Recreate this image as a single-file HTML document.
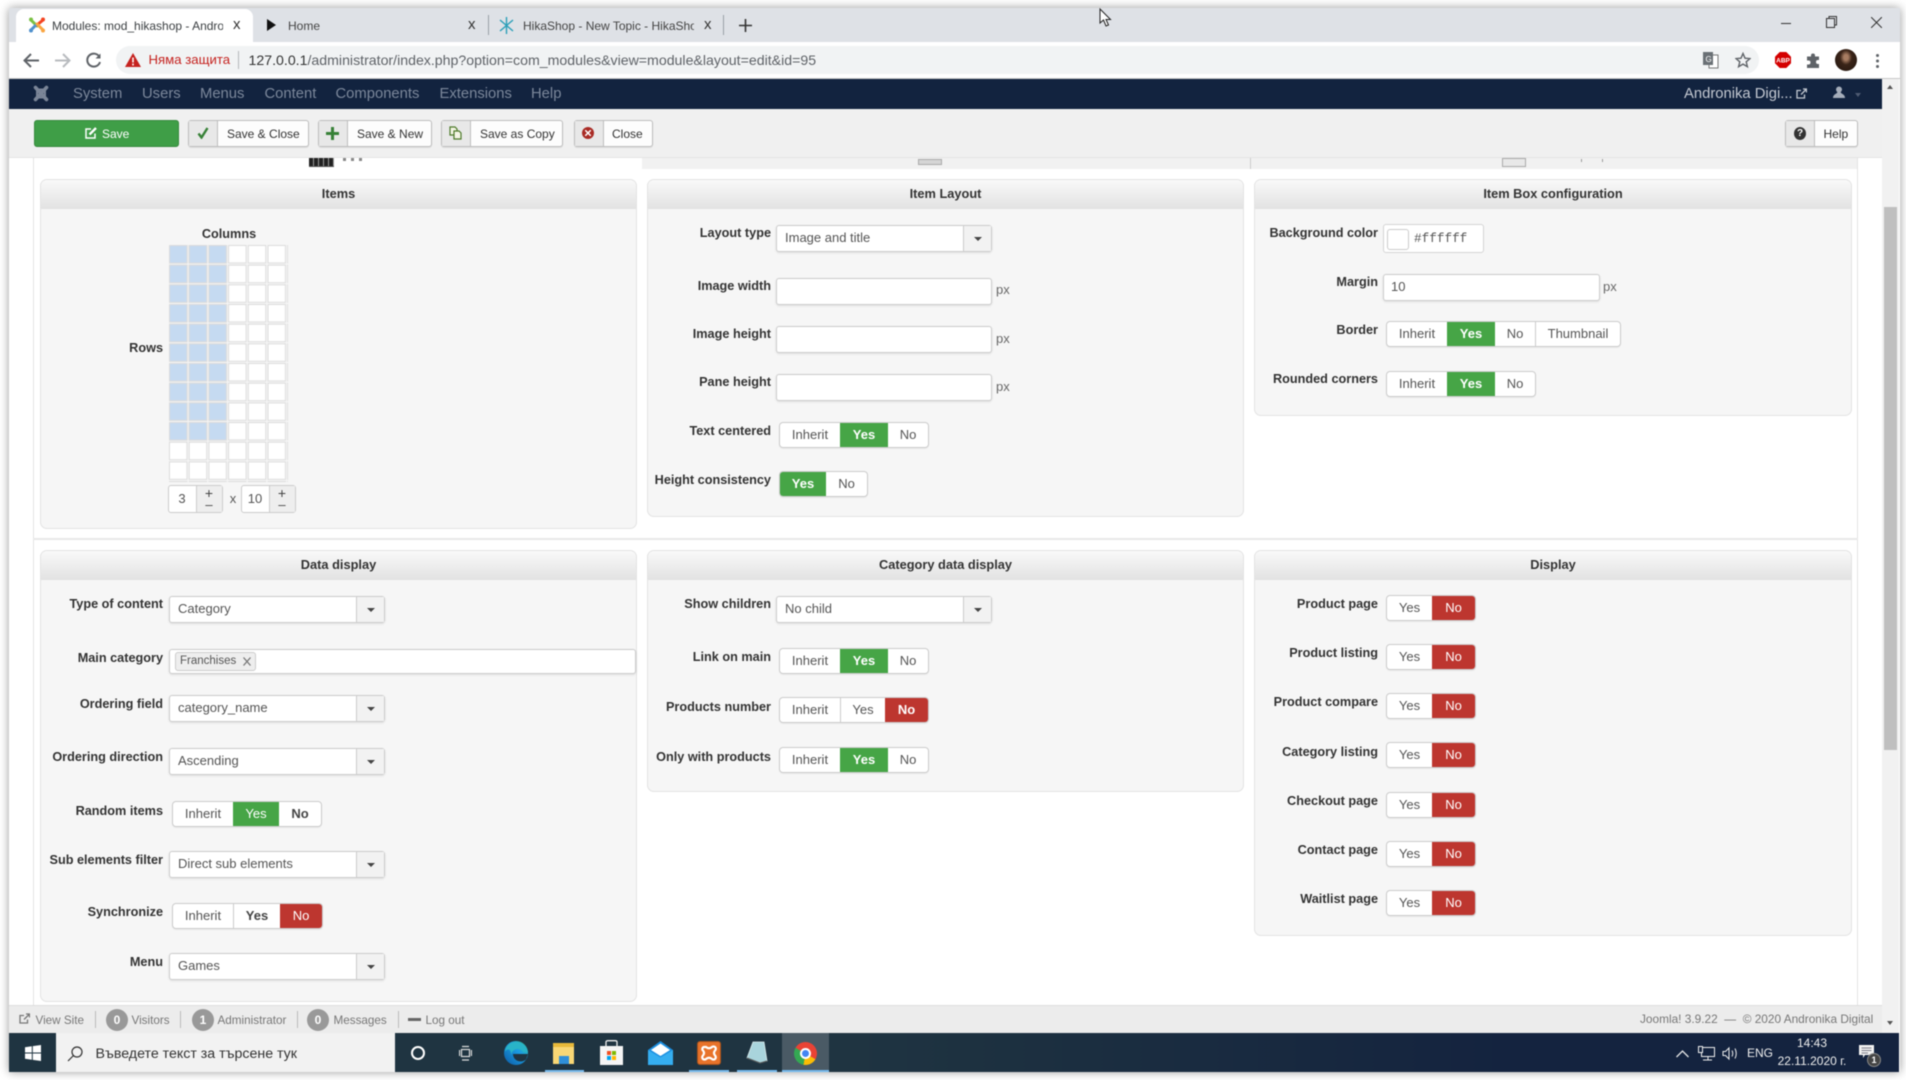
<!DOCTYPE html>
<html><head><meta charset="utf-8"><title>Modules: mod_hikashop</title>
<style>
html,body{margin:0;padding:0;background:#fff}
#p{position:relative;width:1906px;height:1080px;overflow:hidden;background:#fff;font-family:"Liberation Sans","Noto Sans CJK JP",sans-serif;font-size:13px;color:#333;filter:blur(.45px)}
#p div,#p span,#p svg{position:absolute}
.t{white-space:nowrap;line-height:20px;height:20px}
.p{background:#f6f6f6;border:1px solid #e3e3e3;border-radius:7px;overflow:hidden;box-sizing:border-box}
.p h3{margin:0;height:29px;line-height:27px;text-align:center;font-size:12.8px;font-weight:bold;background:linear-gradient(#f9f9f9,#e2e2e2);color:#333}
.l{left:0;text-align:right;font-weight:bold;font-size:12.7px;color:#333;white-space:nowrap;line-height:20px;height:20px}
.c1{width:163px}.c2{width:771px}.c3{width:1378px}
.s,.i{background:#fff;border:1px solid #ccc;border-radius:3px;box-sizing:border-box;height:27px;box-shadow:0 1px 2px rgba(0,0,0,.1);color:#555;line-height:23px;padding-left:8px;white-space:nowrap}
.s i{position:absolute;right:0;top:0;width:28px;height:25px;background:#f2f2f2;border-left:1px solid #ccc;box-sizing:border-box}
.s i:after{content:"";position:absolute;left:10px;top:11px;border:4px solid transparent;border-top:4px solid #444;border-bottom:0}
.g{display:flex;height:24px;border-radius:3px;box-shadow:0 0 0 1px #ccc,0 1px 2px rgba(0,0,0,.15);background:#fff;overflow:hidden}
.g b{display:block;font-weight:normal;text-align:center;line-height:24px;color:#555;box-sizing:border-box;border-left:1px solid #ccc}
.g b:first-child{border-left:0}
.g b.y{background:#46a546;color:#fff;font-weight:bold;border-left:0}
.g b.n{background:#bd362f;color:#fff;font-weight:bold;border-left:0}
.g b.y+b,.g b.n+b{border-left:0}
.g b.d{font-weight:bold;color:#444}
.b{height:27px;top:120px;background:#fdfdfd;border:1px solid #bdbdbd;border-radius:3px;box-sizing:border-box;font-size:12px;line-height:26px;white-space:nowrap;color:#333;box-shadow:0 1px 1px rgba(0,0,0,.08)}
.b i{position:absolute;left:0;top:0;width:28px;height:25px;background:#e8e8e8;border-right:1px solid #bdbdbd}
.b span{top:0}
.px{color:#666;line-height:20px;height:20px}
.nv{top:84px;height:20px;line-height:20px;font-size:14.8px;color:#7c889b;white-space:nowrap}
.f{top:1011px;height:20px;line-height:20px;font-size:11.7px;color:#777;white-space:nowrap}
.bd{top:1009px;width:22px;height:22px;border-radius:50%;background:#999;color:#fff;font-weight:bold;font-size:12px;text-align:center;line-height:22px}
.sp{top:1011px;width:1px;height:17px;background:#bbb}
</style></head><body><div id="p">

<!-- window -->
<div style="left:9px;top:8px;width:1891px;height:1064px;background:#fff;box-shadow:0 0 9px rgba(0,0,0,.4)"></div>
<div style="left:9px;top:8px;width:1891px;height:34px;background:#dee1e6"></div>
<!-- active tab -->
<div style="left:16px;top:9px;width:237px;height:33px;background:#fff;border-radius:8px 8px 0 0"></div>
<svg style="left:28px;top:16px" width="18" height="18" viewBox="0 0 18 18" fill="none" stroke-width="3" stroke-linecap="round"><path d="M3 4L9 10" stroke="#7ac143"/><path d="M15 4L9 9" stroke="#f44321"/><path d="M3 14L8 9" stroke="#5091cd"/><path d="M15 14L9 8" stroke="#f9a541"/><circle cx="3" cy="3.500" r="2" fill="#7ac143" stroke="none"/><circle cx="15" cy="3.500" r="2" fill="#f44321" stroke="none"/><circle cx="3" cy="14.500" r="2" fill="#5091cd" stroke="none"/><circle cx="15" cy="14.500" r="2" fill="#f9a541" stroke="none"/></svg>
<div class="t" style="left:52px;top:16px;width:171px;overflow:hidden;font-size:12px;color:#3c4043">Modules: mod_hikashop - Andronika</div>
<div class="t" style="left:233px;top:15px;font-size:15px;color:#333">x</div>
<svg style="left:266px;top:18px" width="11" height="14"><path d="M1 1L10 7L1 13Z" fill="#111"/></svg>
<div class="t" style="left:288px;top:16px;font-size:12px;color:#444">Home</div>
<div class="t" style="left:468px;top:15px;font-size:15px;color:#333">x</div>
<div style="left:488px;top:15px;width:1px;height:20px;background:#9aa0a6"></div>
<svg style="left:499px;top:17px" width="15" height="17" stroke="#2a9fb8" stroke-width="1.400" fill="none"><path d="M7.500 0V17M1 3L14 14M14 3L1 14"/></svg>
<div class="t" style="left:523px;top:16px;width:171px;overflow:hidden;font-size:12px;color:#444">HikaShop - New Topic - HikaShop</div>
<div class="t" style="left:704px;top:15px;font-size:15px;color:#333">x</div>
<div style="left:723px;top:15px;width:1px;height:20px;background:#9aa0a6"></div>
<svg style="left:739px;top:19px" width="13" height="13" stroke="#333" stroke-width="1.600"><path d="M6.500 0V13M0 6.500H13"/></svg>
<!-- window ctrls -->
<div style="left:1781px;top:23px;width:10px;height:1px;background:#333"></div>
<svg style="left:1826px;top:16px" width="11" height="12" fill="none" stroke="#333"><rect x=".5" y="2.500" width="8" height="9"/><path d="M3 2.500V.5H10.500V9H8.500"/></svg>
<svg style="left:1871px;top:17px" width="11" height="11" stroke="#333"><path d="M0 0L11 11M11 0L0 11"/></svg>
<svg style="left:1099px;top:8px" width="13" height="20"><path d="M1 1V15L4.500 12L7 18L9.500 17L7 11.500H11.500Z" fill="#fff" stroke="#222" stroke-width="1"/></svg>

<!-- toolbar -->
<div style="left:9px;top:78px;width:1891px;height:1px;background:#c9c9c9"></div>
<svg style="left:22px;top:52px" width="18" height="17" fill="none" stroke="#5f6368" stroke-width="2"><path d="M17 8.500H3M9 2L2.500 8.500L9 15"/></svg>
<svg style="left:54px;top:52px" width="18" height="17" fill="none" stroke="#b8bbbf" stroke-width="2"><path d="M1 8.500H15M9 2L15.500 8.500L9 15"/></svg>
<svg style="left:85px;top:52px" width="17" height="17" fill="none" stroke="#5f6368" stroke-width="2"><path d="M14.500 5A6.500 6.500 0 1 0 15 10"/><path d="M15.500 1.500V6.500H10.500Z" fill="#5f6368" stroke="none"/></svg>
<div style="left:116px;top:46px;width:1643px;height:28px;background:#f1f3f4;border-radius:14px"></div>
<svg style="left:125px;top:53px" width="16" height="14"><path d="M8 0L16 14H0Z" fill="#c5221f"/><path d="M8 4.500V9.500M8 10.500V12.500" stroke="#fff" stroke-width="1.500"/></svg>
<div class="t" style="left:148.500px;top:50px;font-size:13.200px;color:#c5221f">Няма защита</div>
<div style="left:238px;top:51px;width:1px;height:18px;background:#b5b8bc"></div>
<div class="t" style="left:248.500px;top:50px;font-size:14.150px;color:#333">127.0.0.1<span style="position:static;color:#5f6368">/administrator/index.php?option=com_modules&amp;view=module&amp;layout=edit&amp;id=95</span></div>
<svg style="left:1703px;top:52px" width="16" height="17"><rect x="6" y="3" width="9" height="13" fill="#fff" stroke="#777"/><rect x="0" y="0" width="10" height="13" fill="#6a7075"/><text x="2.500" y="10" font-size="8" fill="#fff" font-family="Liberation Sans">G</text></svg>
<svg style="left:1735px;top:52px" width="16" height="16" fill="none" stroke="#5f6368" stroke-width="1.400"><path d="M8 1.500L10 6.200L15 6.600L11.200 9.800L12.400 14.700L8 12.100L3.600 14.700L4.800 9.800L1 6.600L6 6.200Z"/></svg>
<svg style="left:1775px;top:52px" width="16" height="16"><path d="M4.700 0H11.300L16 4.700V11.300L11.300 16H4.700L0 11.300V4.700Z" fill="#d40000"/><text x="8" y="10.500" text-anchor="middle" font-size="6.500" font-weight="bold" fill="#fff" font-family="Liberation Sans">ABP</text></svg>
<svg style="left:1806px;top:53px" width="15" height="15" fill="#5f6368"><path d="M5 2.500a2 2 0 0 1 4 0V3.500H13V7H12a2 2 0 0 0 0 4h1v4H1V11.500H2.500a2 2 0 0 0 0-4H1V3.500H5Z"/></svg>
<div style="left:1835px;top:49px;width:22px;height:22px;border-radius:50%;background:radial-gradient(ellipse at 50% 38%,#a87d62 0 14%,#3a2418 38%,#20140e 100%)"></div>
<div style="left:1876px;top:54px;width:3px;height:3px;border-radius:50%;background:#5f6368;box-shadow:0 5.500px 0 #5f6368,0 11px 0 #5f6368"></div>

<!-- nav -->
<div style="left:9px;top:79px;width:1873px;height:30px;background:#12233f"></div>
<svg style="left:32px;top:84px" width="18" height="19" viewBox="0 0 18 19" fill="none" stroke="#7a8597" stroke-width="3.600" stroke-linecap="round"><path d="M3.500 3.500L14.500 15.500M14.500 3.500L3.500 15.500"/><rect x="5" y="5.500" width="8" height="8" stroke-width="2"/></svg>
<div class="nv" style="left:73px">System</div>
<div class="nv" style="left:142px">Users</div>
<div class="nv" style="left:200px">Menus</div>
<div class="nv" style="left:264.500px">Content</div>
<div class="nv" style="left:335.500px">Components</div>
<div class="nv" style="left:439.500px">Extensions</div>
<div class="nv" style="left:531px">Help</div>
<div class="nv" style="left:1684px;color:#c4c9d2">Andronika Digi...</div>
<svg style="left:1796px;top:88px" width="11" height="11" fill="none" stroke="#c4c9d2" stroke-width="1.300"><path d="M8.500 6.500V10H1V2.500H5M5 6.500L10 1.500M7 1H10.500V4.500"/></svg>
<svg style="left:1833px;top:86px" width="12" height="12" fill="#a5adba"><circle cx="6" cy="3.500" r="3"/><path d="M0 12C0 8 4 8 4.500 6H7.500C8 8 12 8 12 12Z"/></svg>
<div style="left:1855px;top:93px;border:3px solid transparent;border-top:4px solid #4e5b72;border-bottom:0"></div>

<!-- subhead -->
<div style="left:9px;top:109px;width:1873px;height:49px;background:#f0f0f0;border-bottom:1px solid #e4e4e4;box-sizing:border-box"></div>
<div style="left:34px;top:120px;width:145px;height:27px;background:#3f9e47;border:1px solid #37893e;border-radius:3px;box-sizing:border-box"></div>
<svg style="left:85px;top:127px" width="12" height="12" fill="none" stroke="#fff" stroke-width="1.500"><path d="M10 6.500V11H1V2H6"/><path d="M4.500 7.500L11 1" stroke-width="2.300"/></svg>
<div class="t" style="left:102px;top:124px;font-size:12px;color:#fff">Save</div>

<div class="b" style="left:188px;width:121px"><i></i><span style="left:38px">Save &amp; Close</span></div>
<svg style="left:197px;top:127px" width="12" height="12" fill="none" stroke="#378137" stroke-width="2.400"><path d="M1.500 6.500L4.500 10.500L10.500 1"/></svg>
<div class="b" style="left:318px;width:114px"><i></i><span style="left:38px">Save &amp; New</span></div>
<svg style="left:326px;top:127px" width="13" height="13" stroke="#378137" stroke-width="3"><path d="M6.500 0V13M0 6.500H13"/></svg>
<div class="b" style="left:441px;width:122px"><i></i><span style="left:38px">Save as Copy</span></div>
<svg style="left:449px;top:126px" width="13" height="14" fill="#f5f5e6" stroke="#4d7a2a" stroke-width="1.200"><path d="M1 1H6L8 3V9H1Z"/><path d="M5 5H10L12 7V13H5Z"/></svg>
<div class="b" style="left:574px;width:79px"><i></i><span style="left:37px">Close</span></div>
<div style="left:582px;top:127px;width:12px;height:12px;border-radius:50%;background:#a92b25"></div>
<svg style="left:585px;top:130px" width="6" height="6" stroke="#fff" stroke-width="1.500"><path d="M0 0L6 6M6 0L0 6"/></svg>
<div class="b" style="left:1785px;width:73px"><i></i><span style="left:37.500px">Help</span></div>
<div style="left:1794px;top:127px;width:12px;height:13px;border-radius:50%;background:#333;color:#fff;font-weight:bold;font-size:10px;line-height:13px;text-align:center">?</div>

<!-- remnants strip -->
<div style="left:642px;top:158px;width:1215px;height:11px;background:#f1f1f1"></div>
<div style="left:1250px;top:158px;width:1px;height:11px;background:#ccc"></div>
<div style="left:33px;top:158px;width:1px;height:847px;background:#e3e3e3"></div>
<div style="left:1857px;top:158px;width:1px;height:847px;background:#e3e3e3"></div>
<div style="left:33px;top:538px;width:1825px;height:2px;background:#e8e8e8"></div>
<div style="left:309px;top:158px;width:25px;height:8px;background:repeating-linear-gradient(90deg,#222 0 4px,#999 4px 5px);border-bottom:1px solid #555"></div>
<div style="left:343px;top:158px;width:21px;height:3px;background:repeating-linear-gradient(90deg,#888 0 3px,#fff 3px 8px)"></div>
<div style="left:918px;top:159px;width:24px;height:6px;background:#d5d5d5;border:1px solid #aaa;box-sizing:border-box"></div>
<div style="left:1502px;top:158px;width:24px;height:9px;background:#e8e8e8;border:1px solid #aaa;box-sizing:border-box"></div>
<div style="left:1581px;top:159px;width:1px;height:3px;background:#999"></div>
<div style="left:1602px;top:159px;width:1px;height:3px;background:#999"></div>

<!-- panels -->
<div class="p" style="left:40px;top:179px;width:597px;height:350px"><h3>Items</h3></div>
<div class="p" style="left:647px;top:179px;width:597px;height:338px"><h3>Item Layout</h3></div>
<div class="p" style="left:1254px;top:179px;width:598px;height:237px"><h3>Item Box configuration</h3></div>
<div class="p" style="left:40px;top:550px;width:597px;height:452px"><h3>Data display</h3></div>
<div class="p" style="left:647px;top:550px;width:597px;height:242px"><h3>Category data display</h3></div>
<div class="p" style="left:1254px;top:550px;width:598px;height:386px"><h3>Display</h3></div>

<!-- Items -->
<div class="t" style="left:179px;width:100px;text-align:center;top:224px;font-weight:bold;font-size:12.700px">Columns</div>
<div class="l c1" style="top:338px">Rows</div>
<svg style="left:169px;top:245px" width="119" height="237"><defs>
<pattern id="w" width="19.700" height="19.670" patternUnits="userSpaceOnUse"><rect x=".5" y=".5" width="17.500" height="17.500" fill="#fff" stroke="#dcdcdc"/></pattern>
<pattern id="c" width="19.700" height="19.670" patternUnits="userSpaceOnUse"><rect x=".5" y=".5" width="17.500" height="17.500" fill="#c5daf1" stroke="#dcdcdc"/></pattern></defs>
<rect width="119" height="237" fill="url(#w)"/><rect width="59.100" height="196.700" fill="url(#c)"/></svg>
<div style="left:168px;top:485px;width:55px;height:28px;background:#fff;border:1px solid #ccc;border-radius:3px;box-sizing:border-box"></div>
<div style="left:196px;top:486px;width:26px;height:26px;background:#eee;border-left:1px solid #ccc;box-sizing:border-box"></div>
<div class="t" style="left:168px;width:28px;text-align:center;top:489px;font-size:13px;color:#555">3</div>
<div class="t" style="left:196px;width:26px;text-align:center;top:483px;font-size:14px;color:#444">+</div>
<div class="t" style="left:196px;width:26px;text-align:center;top:495px;font-size:13px;color:#444">–</div>
<div class="t" style="left:224px;width:18px;text-align:center;top:489px;color:#555">x</div>
<div style="left:241px;top:485px;width:55px;height:28px;background:#fff;border:1px solid #ccc;border-radius:3px;box-sizing:border-box"></div>
<div style="left:269px;top:486px;width:26px;height:26px;background:#eee;border-left:1px solid #ccc;box-sizing:border-box"></div>
<div class="t" style="left:241px;width:28px;text-align:center;top:489px;font-size:13px;color:#555">10</div>
<div class="t" style="left:269px;width:26px;text-align:center;top:483px;font-size:14px;color:#444">+</div>
<div class="t" style="left:269px;width:26px;text-align:center;top:495px;font-size:13px;color:#444">–</div>

<!-- Item Layout -->
<div class="l c2" style="top:223px">Layout type</div>
<div class="s" style="left:776px;top:225px;width:216px">Image and title<i></i></div>
<div class="l c2" style="top:276px">Image width</div>
<div class="i" style="left:776px;top:278px;width:216px"></div><div class="px" style="left:996px;top:280px">px</div>
<div class="l c2" style="top:324px">Image height</div>
<div class="i" style="left:776px;top:326px;width:216px"></div><div class="px" style="left:996px;top:329px">px</div>
<div class="l c2" style="top:372px">Pane height</div>
<div class="i" style="left:776px;top:374px;width:216px"></div><div class="px" style="left:996px;top:377px">px</div>
<div class="l c2" style="top:421px">Text centered</div>
<div class="g" style="left:780px;top:423px"><b style="width:60px">Inherit</b><b class="y" style="width:48px">Yes</b><b style="width:40px">No</b></div>
<div class="l c2" style="top:470px">Height consistency</div>
<div class="g" style="left:780px;top:472px"><b class="y" style="width:46px">Yes</b><b style="width:41px">No</b></div>

<!-- Item box -->
<div class="l c3" style="top:223px">Background color</div>
<div style="left:1383px;top:224px;width:101px;height:29px;background:#fff;border:1px solid #d5d5d5;border-radius:3px;box-sizing:border-box"></div>
<div style="left:1387px;top:229px;width:22px;height:21px;background:#fff;border:1px solid #ccc;border-radius:3px;box-sizing:border-box"></div>
<div class="t" style="left:1414px;top:229px;font-family:'Liberation Mono',monospace;font-size:12.700px;color:#555">#ffffff</div>
<div class="l c3" style="top:272px">Margin</div>
<div class="i" style="left:1383px;top:274px;width:217px;padding-left:7px">10</div><div class="px" style="left:1603px;top:277px">px</div>
<div class="l c3" style="top:320px">Border</div>
<div class="g" style="left:1387px;top:322px"><b style="width:60px">Inherit</b><b class="y" style="width:48px">Yes</b><b style="width:40px">No</b><b style="width:85px">Thumbnail</b></div>
<div class="l c3" style="top:369px">Rounded corners</div>
<div class="g" style="left:1387px;top:372px"><b style="width:60px">Inherit</b><b class="y" style="width:48px">Yes</b><b style="width:40px">No</b></div>

<!-- Data display -->
<div class="l c1" style="top:594px">Type of content</div>
<div class="s" style="left:169px;top:596px;width:216px">Category<i></i></div>
<div class="l c1" style="top:648px">Main category</div>
<div class="i" style="left:169px;top:649px;width:467px;height:25px"></div>
<div style="left:175px;top:652px;width:81px;height:19px;background:#eee;border:1px solid #ccc;border-radius:3px;box-sizing:border-box"></div>
<div class="t" style="left:180px;top:651px;font-size:11.500px;color:#555">Franchises</div>
<svg style="left:243px;top:657px" width="8" height="9" stroke="#777" stroke-width="1.300"><path d="M.5 .5L7.500 8.500M7.500 .5L.5 8.500"/></svg>
<div class="l c1" style="top:694px">Ordering field</div>
<div class="s" style="left:169px;top:695px;width:216px">category_name<i></i></div>
<div class="l c1" style="top:747px">Ordering direction</div>
<div class="s" style="left:169px;top:748px;width:216px">Ascending<i></i></div>
<div class="l c1" style="top:801px">Random items</div>
<div class="g" style="left:173px;top:802px"><b style="width:60px">Inherit</b><b class="y" style="width:46px;font-weight:normal">Yes</b><b class="d" style="width:42px">No</b></div>
<div class="l c1" style="top:850px">Sub elements filter</div>
<div class="s" style="left:169px;top:851px;width:216px">Direct sub elements<i></i></div>
<div class="l c1" style="top:902px">Synchronize</div>
<div class="g" style="left:173px;top:904px"><b style="width:60px">Inherit</b><b class="d" style="width:47px">Yes</b><b class="n" style="width:42px;font-weight:normal">No</b></div>
<div class="l c1" style="top:952px">Menu</div>
<div class="s" style="left:169px;top:953px;width:216px">Games<i></i></div>

<!-- Category data -->
<div class="l c2" style="top:594px">Show children</div>
<div class="s" style="left:776px;top:596px;width:216px">No child<i></i></div>
<div class="l c2" style="top:647px">Link on main</div>
<div class="g" style="left:780px;top:649px"><b style="width:60px">Inherit</b><b class="y" style="width:48px">Yes</b><b style="width:40px">No</b></div>
<div class="l c2" style="top:697px">Products number</div>
<div class="g" style="left:780px;top:698px"><b style="width:60px">Inherit</b><b style="width:45px">Yes</b><b class="n" style="width:43px">No</b></div>
<div class="l c2" style="top:747px">Only with products</div>
<div class="g" style="left:780px;top:748px"><b style="width:60px">Inherit</b><b class="y" style="width:48px">Yes</b><b style="width:40px">No</b></div>

<!-- Display -->
<div class="l c3" style="top:594px">Product page</div>
<div class="g" style="left:1387px;top:596px"><b style="width:45px">Yes</b><b class="n" style="width:43px;font-weight:normal">No</b></div>
<div class="l c3" style="top:643px">Product listing</div>
<div class="g" style="left:1387px;top:645px"><b style="width:45px">Yes</b><b class="n" style="width:43px;font-weight:normal">No</b></div>
<div class="l c3" style="top:692px">Product compare</div>
<div class="g" style="left:1387px;top:694px"><b style="width:45px">Yes</b><b class="n" style="width:43px;font-weight:normal">No</b></div>
<div class="l c3" style="top:742px">Category listing</div>
<div class="g" style="left:1387px;top:743px"><b style="width:45px">Yes</b><b class="n" style="width:43px;font-weight:normal">No</b></div>
<div class="l c3" style="top:791px">Checkout page</div>
<div class="g" style="left:1387px;top:793px"><b style="width:45px">Yes</b><b class="n" style="width:43px;font-weight:normal">No</b></div>
<div class="l c3" style="top:840px">Contact page</div>
<div class="g" style="left:1387px;top:842px"><b style="width:45px">Yes</b><b class="n" style="width:43px;font-weight:normal">No</b></div>
<div class="l c3" style="top:889px">Waitlist page</div>
<div class="g" style="left:1387px;top:891px"><b style="width:45px">Yes</b><b class="n" style="width:43px;font-weight:normal">No</b></div>

<!-- scrollbar -->
<div style="left:1882px;top:79px;width:17px;height:954px;background:#f1f1f1"></div>
<div style="left:1884px;top:207px;width:13px;height:543px;background:#bfbfbf"></div>
<div style="left:1887px;top:85px;border:3.500px solid transparent;border-bottom:4px solid #555;border-top:0"></div>
<div style="left:1887px;top:1021px;border:3.500px solid transparent;border-top:4px solid #555;border-bottom:0"></div>

<!-- footer -->
<div style="left:9px;top:1005px;width:1873px;height:28px;background:#ececec;border-top:1px solid #ddd;box-sizing:border-box"></div>
<svg style="left:19px;top:1013px" width="11" height="11" fill="none" stroke="#777" stroke-width="1.300"><path d="M8.500 6.500V10H1V2.500H5M5 6.500L10 1.500M7 1H10.500V4.500"/></svg>
<div class="f" style="left:35.500px">View Site</div>
<div class="sp" style="left:95px"></div>
<div class="bd" style="left:106px">0</div>
<div class="f" style="left:131.500px">Visitors</div>
<div class="sp" style="left:180px"></div>
<div class="bd" style="left:192px">1</div>
<div class="f" style="left:217.500px">Administrator</div>
<div class="sp" style="left:297px"></div>
<div class="bd" style="left:307px">0</div>
<div class="f" style="left:333.500px">Messages</div>
<div class="sp" style="left:398px"></div>
<div style="left:408px;top:1018px;width:13px;height:3px;background:#666"></div>
<div class="f" style="left:425.500px">Log out</div>
<div class="f" style="left:1640px;font-size:11.850px;top:1009px">Joomla! 3.9.22 &nbsp;—&nbsp; © 2020 Andronika Digital</div>

<!-- taskbar -->
<div style="left:9px;top:1033px;width:1890px;height:39px;background:linear-gradient(90deg,#1f3441 0,#1f3441 45%,#14233f 80%,#14233f 100%)"></div>
<svg style="left:25px;top:1045px" width="16" height="16" fill="#fff"><path d="M0 2.300L6.800 1.300V7.500H0ZM7.800 1.100L16 0V7.500H7.800ZM0 8.500H6.800V14.700L0 13.700ZM7.800 8.500H16V16L7.800 14.900Z"/></svg>
<div style="left:56px;top:1033px;width:339px;height:39px;background:#f2f2f2"></div>
<svg style="left:67px;top:1046px" width="16" height="16" fill="none" stroke="#333" stroke-width="1.200"><circle cx="10" cy="6" r="5"/><path d="M6.500 9.500L1 15"/></svg>
<div class="t" style="left:95.500px;top:1044px;font-size:14.200px;color:#333">Въведете текст за търсене тук</div>
<div style="left:411px;top:1046px;width:14px;height:14px;border-radius:50%;border:2px solid #fff;box-sizing:border-box"></div>
<svg style="left:459px;top:1045px" width="13" height="17" fill="none" stroke="#ddd" stroke-width="1.200"><rect x="2.500" y="4.500" width="8" height="7"/><path d="M3 1.500H10M3 15H10M.5 5V11M12.500 5V11"/></svg>
<!-- edge -->
<svg style="left:504px;top:1041px" width="24" height="24" viewBox="0 0 24 24"><defs><linearGradient id="e1" x1="0" y1="1" x2="1" y2="0"><stop offset="0" stop-color="#0c59a4"/><stop offset=".6" stop-color="#1b9de2"/><stop offset="1" stop-color="#36c58d"/></linearGradient></defs><circle cx="12" cy="12" r="12" fill="url(#e1)"/><path d="M24 13H9C9 19 16 23 22 18.500L24 13Z" fill="#1f3441"/><path d="M7 16C7 7 16 6 19 11H24C23 5 18 1 12 1C5 1 1 6 1 11C2 8 8 6 7 16Z" fill="#29b3c8"/></svg>
<!-- explorer -->
<div style="left:553px;top:1043px;width:21px;height:6px;background:#e8b93a"></div>
<div style="left:553px;top:1047px;width:21px;height:17px;background:#f8d775"></div>
<div style="left:559px;top:1056px;width:10px;height:8px;background:#2f8fd8"></div>
<!-- store -->
<div style="left:600px;top:1046px;width:23px;height:19px;background:#f5f5f5"></div>
<svg style="left:604px;top:1040px" width="15" height="8" fill="none" stroke="#eee" stroke-width="1.300"><path d="M2 8V2Q2 .7 4 .7H11Q13 .7 13 2V8"/></svg>
<div style="left:607px;top:1051px;width:4px;height:4px;background:#f25022"></div>
<div style="left:612px;top:1051px;width:4px;height:4px;background:#7fba00"></div>
<div style="left:607px;top:1056px;width:4px;height:4px;background:#00a4ef"></div>
<div style="left:612px;top:1056px;width:4px;height:4px;background:#ffb900"></div>
<!-- mail -->
<svg style="left:648px;top:1041px" width="25" height="24"><path d="M0 9L12.500 0L25 9V24H0Z" fill="#1a8ee0"/><path d="M3 9L12.500 2.500L22 9L12.500 15Z" fill="#fff"/><path d="M0 9L12.500 16.500L25 9V24H0Z" fill="#35aef0"/></svg>
<!-- xampp -->
<div style="left:697px;top:1041px;width:24px;height:24px;background:#e8732a;border-radius:3px;border:1px solid #a5511c;box-sizing:border-box"></div>
<svg style="left:701px;top:1045px" width="16" height="16" fill="none" stroke="#fff" stroke-width="2.200"><path d="M3.500 2A2 2 0 0 0 2 5.500Q4 8 2 10.500A2 2 0 0 0 5 14Q8 11.500 11 14A2 2 0 0 0 14 10.500Q12 8 14 5.500A2 2 0 0 0 11 2Q8 4.500 5 2Z"/></svg>
<!-- notes -->
<svg style="left:745px;top:1041px" width="23" height="24"><path d="M8 1H19L22 20L15 22L2 17Z" fill="#a9d4dc" stroke="#dfeff0" stroke-width=".8"/><path d="M2 17L15 22L22 20" stroke="#555" fill="none"/></svg>
<!-- chrome -->
<div style="left:782px;top:1033px;width:47px;height:39px;background:#4a5a65"></div>
<div style="left:794px;top:1042px;width:23px;height:23px;border-radius:50%;background:conic-gradient(#ea4335 0 120deg,#fbbc05 120deg 190deg,#34a853 190deg 300deg,#ea4335 300deg)"></div>
<div style="left:800px;top:1048px;width:11px;height:11px;border-radius:50%;background:#4285f4;border:2px solid #fff;box-sizing:border-box"></div>
<div style="left:545px;top:1070px;width:39px;height:2px;background:#76b9ed"></div>
<div style="left:689px;top:1070px;width:40px;height:2px;background:#76b9ed"></div>
<div style="left:737px;top:1070px;width:40px;height:2px;background:#76b9ed"></div>
<div style="left:782px;top:1070px;width:47px;height:2px;background:#76b9ed"></div>
<!-- tray -->
<svg style="left:1676px;top:1050px" width="13" height="8" fill="none" stroke="#e8e8e8" stroke-width="1.300"><path d="M.5 7L6.500 1L12.500 7"/></svg>
<svg style="left:1698px;top:1046px" width="17" height="15" fill="none" stroke="#eee" stroke-width="1"><rect x="3.500" y="1.500" width="13" height="9"/><path d="M10 10.500V13.500M5 14H14"/><rect x=".5" y=".5" width="4" height="6" fill="#14233f"/></svg>
<svg style="left:1722px;top:1046px" width="17" height="15" fill="none" stroke="#eee" stroke-width="1"><path d="M1 5.500H3.500L7 2V13L3.500 9.500H1Z"/><path d="M10 4.500Q11.500 7.500 10 10.500M13 2.500Q15.500 7.500 13 12.500"/></svg>
<div class="t" style="left:1747px;top:1043px;font-size:12px;color:#eee">ENG</div>
<div class="t" style="left:1772px;width:80px;text-align:center;top:1033px;font-size:12px;color:#eee">14:43</div>
<div class="t" style="left:1772px;width:80px;text-align:center;top:1051px;font-size:12px;color:#eee">22.11.2020 г.</div>
<svg style="left:1859px;top:1045px" width="15" height="14"><path d="M0 0H15V10H6L4 13V10H0Z" fill="#f2f2f2"/><path d="M2.500 3H12.500M2.500 5.500H12.500M2.500 8H9" stroke="#556" stroke-width=".8"/></svg>
<div style="left:1867px;top:1053px;width:14px;height:14px;border-radius:50%;background:#444;border:1px solid #888;box-sizing:border-box;color:#fff;font-size:9px;font-weight:bold;line-height:12px;text-align:center">1</div>

</div></body></html>
